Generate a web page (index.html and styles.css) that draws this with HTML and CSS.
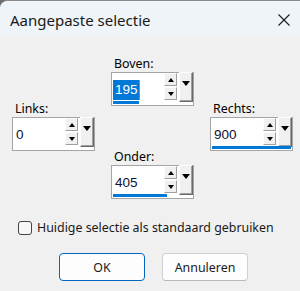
FILE: index.html
```html
<!DOCTYPE html>
<html>
<head>
<meta charset="utf-8">
<link rel="stylesheet" href="styles.css">
</head>
<body>
<div class="window">
  <div class="titlebar">
    <span class="title">Aangepaste selectie</span>
    <svg class="close" width="12" height="12" viewBox="0 0 12 12"><path d="M0.5 0.5 L11.5 11.5 M11.5 0.5 L0.5 11.5" stroke="#1b1b1b" stroke-width="1.1" fill="none"/></svg>
  </div>
  <div class="content">
    <div class="spins">
      <div class="col side">
        <div class="ctl">
          <div class="lbl">Links:</div>
          <div class="box">
            <div class="row">
              <div class="field"><span class="val">0</span></div>
              <div class="spin"><div class="sb"><i class="up"></i></div><div class="sb"><i class="dn"></i></div></div>
              <div class="drop"><i class="dd"></i></div>
            </div>
            <div class="bar" style="width:0px"></div>
          </div>
        </div>
      </div>
      <div class="col center">
        <div class="ctl">
          <div class="lbl">Boven:</div>
          <div class="box">
            <div class="row">
              <div class="field"><span class="val sel">195</span></div>
              <div class="spin"><div class="sb"><i class="up"></i></div><div class="sb"><i class="dn"></i></div></div>
              <div class="drop"><i class="dd"></i></div>
            </div>
            <div class="bar" style="width:26px"></div>
          </div>
        </div>
        <div class="ctl">
          <div class="lbl">Onder:</div>
          <div class="box">
            <div class="row">
              <div class="field"><span class="val">405</span></div>
              <div class="spin"><div class="sb"><i class="up"></i></div><div class="sb"><i class="dn"></i></div></div>
              <div class="drop"><i class="dd"></i></div>
            </div>
            <div class="bar" style="width:54px"></div>
          </div>
        </div>
      </div>
      <div class="col side right">
        <div class="ctl">
          <div class="lbl">Rechts:</div>
          <div class="box">
            <div class="row">
              <div class="field"><span class="val">900</span></div>
              <div class="spin"><div class="sb"><i class="up"></i></div><div class="sb"><i class="dn"></i></div></div>
              <div class="drop"><i class="dd"></i></div>
            </div>
            <div class="bar" style="width:79px"></div>
          </div>
        </div>
      </div>
    </div>
    <label class="check"><span class="cb"></span><span>Huidige selectie als standaard gebruiken</span></label>
    <div class="buttons">
      <button class="btn default">OK</button>
      <button class="btn">Annuleren</button>
    </div>
  </div>
</div>
</body>
</html>
```

FILE: styles.css
```css
html, body {
  margin: 0;
  padding: 0;
  background: #6e6e6e;
}
.window {
  width: 300px;
  height: 290px;
  background: #f0f0f0;
  border-top: 1px solid #8a8a8a;
  border-top-left-radius: 8px;
  overflow: hidden;
  font-family: "Noto Sans", sans-serif;
  color: #000;
}
.titlebar {
  height: 36px;
  background: #eef4f7;
  display: flex;
  align-items: center;
  justify-content: space-between;
  padding: 0 10px 0 10px;
  box-sizing: border-box;
}
.title {
  font-size: 15px;
  color: #1a1a1a;
  margin-top: 2px;
}
.close {
  margin-right: 0;
  margin-top: 2px;
}
.content {
  padding: 19px 0 0 12px;
}
.spins {
  display: flex;
  gap: 16px;
  height: 143px;
}
.col {
  width: 83px;
  display: flex;
  flex-direction: column;
  gap: 43px;
}
.side { margin-top: 45px; }
.lbl {
  font-size: 12.4px;
  line-height: 16px;
  padding-left: 3px;
}
.box {
  width: 83px;
  height: 34px;
  box-sizing: border-box;
  border: 1px solid #a5a5a5;
  background: #fff;
  display: flex;
  flex-direction: column;
  gap: 1px;
}
.row {
  height: 27px;
  display: flex;
}
.field {
  flex: 1;
  padding: 4px 0 0 1px;
}
.val {
  display: inline-block;
  font-family: "Liberation Sans", sans-serif;
  font-size: 13.5px;
  line-height: 20px;
  padding: 0 1px 0 2px;
  color: #101030;
}
.val.sel {
  background: #0078d7;
  color: #fff;
  box-shadow: 1px 0 0 #e07a20;
}
.spin {
  width: 13px;
  display: flex;
  flex-direction: column;
  gap: 1px;
  padding-top: 0;
  margin-right: 2px;
}
.sb {
  height: 13px;
  box-sizing: border-box;
  background: #f0f0f0;
  border: 1px solid;
  border-color: #fdfdfd #a0a0a0 #a0a0a0 #fdfdfd;
  display: flex;
  align-items: center;
  justify-content: center;
}
.up, .dn, .dd {
  width: 0;
  height: 0;
  border-left: 3.5px solid transparent;
  border-right: 3.5px solid transparent;
}
.up { border-bottom: 4px solid #000; }
.dn { border-top: 4px solid #000; }
.drop {
  width: 14px;
  height: 30px;
  margin-top: -1px;
  box-sizing: border-box;
  background: #f0f0f0;
  border: 1px solid;
  border-color: #fdfdfd #696969 #696969 #fdfdfd;
  box-shadow: inset -1px -1px 0 #a0a0a0;
  display: flex;
  justify-content: center;
  padding-top: 8px;
}
.dd {
  border-left-width: 4.5px;
  border-right-width: 4.5px;
  border-top: 5px solid #000;
}
.bar {
  height: 3px;
  background: #0078d7;
  margin-left: 1px;
}
.check {
  display: flex;
  align-items: center;
  gap: 5px;
  margin: 20px 0 0 6px;
  font-size: 12.4px;
  line-height: 18px;
  color: #1a1a1a;
}
.cb {
  width: 14px;
  height: 14px;
  box-sizing: border-box;
  border: 1px solid #444;
  border-radius: 3px;
  background: #f7f7f7;
}
.buttons {
  display: flex;
  gap: 17px;
  margin: 16px 0 0 47px;
}
.btn {
  width: 86px;
  height: 28px;
  box-sizing: border-box;
  background: #fdfdfd;
  border: 1px solid #d0d0d0;
  border-bottom-color: #b8b8b8;
  border-radius: 4px;
  font-family: "Noto Sans", sans-serif;
  font-size: 12.4px;
  color: #1a1a1a;
  padding: 0;
}
.btn.default {
  border: 1px solid #0067c0;
}
```
